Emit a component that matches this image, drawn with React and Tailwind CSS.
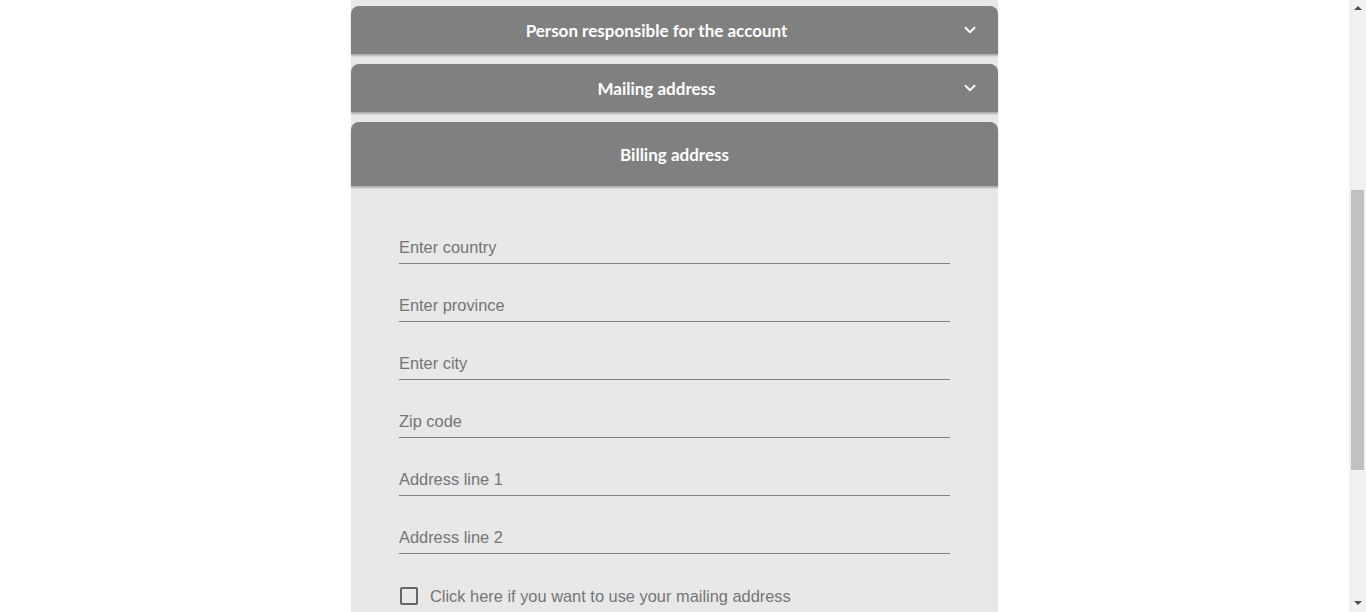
import { ChevronDown } from "lucide-react";

const fields = [
  "Enter country",
  "Enter province",
  "Enter city",
  "Zip code",
  "Address line 1",
  "Address line 2",
];

function SectionHeader({ title, tall, chevron }) {
  return (
    <div
      className={`flex items-center rounded-t-lg bg-[#808080] text-white shadow-[0_2px_2px_rgba(0,0,0,0.25)] ${
        tall ? "h-16" : "h-12"
      }`}
    >
      <span className="flex-1 pt-[2px] text-center text-[17px] font-bold font-['Lato',sans-serif]">
        {title}
      </span>
      {chevron ? (
        <div className="w-9 flex items-center">
          <ChevronDown className="size-[18px] -ml-px" strokeWidth={2.5} />
        </div>
      ) : null}
    </div>
  );
}

export default function App() {
  return (
    <div className="flex h-[612px] overflow-hidden bg-white">
      <div className="flex flex-1 justify-center">
        <div className="w-[647px] bg-[#e8e8e8] pt-[6px]">
          <SectionHeader title="Person responsible for the account" chevron />
          <div className="h-[10px]" />
          <SectionHeader title="Mailing address" chevron />
          <div className="h-[10px]" />
          <SectionHeader title="Billing address" tall />
          <form className="px-12 pt-12 font-['Liberation_Sans',Arial,sans-serif]">
            <div className="flex flex-col gap-[28px]">
              {fields.map((f) => (
                <input
                  key={f}
                  type="text"
                  placeholder={f}
                  className="block w-full h-[30px] pb-[2px] border-b border-[#808080] bg-transparent text-[16.4px] text-[#333] placeholder:text-[#757575] focus:outline-none"
                />
              ))}
            </div>
            <label className="mt-[30px] flex items-center gap-3 text-[16.4px] text-[#757575]">
              <span className="ml-px size-[18px] rounded-[2px] border-2 border-[#666]" />
              Click here if you want to use your mailing address
            </label>
          </form>
        </div>
      </div>
      {/* scrollbar */}
      <div className="flex w-[17px] flex-col items-center bg-[#f1f1f1]">
        <div className="mt-[6px] h-0 w-0 border-x-[4px] border-b-[4px] border-x-transparent border-b-[#505050]" />
        <div className="mt-[180px] h-[280px] w-[13px] bg-[#c1c1c1]" />
        <div className="mt-[131px] h-0 w-0 border-x-[4px] border-t-[4px] border-x-transparent border-t-[#505050]" />
      </div>
    </div>
  );
}
